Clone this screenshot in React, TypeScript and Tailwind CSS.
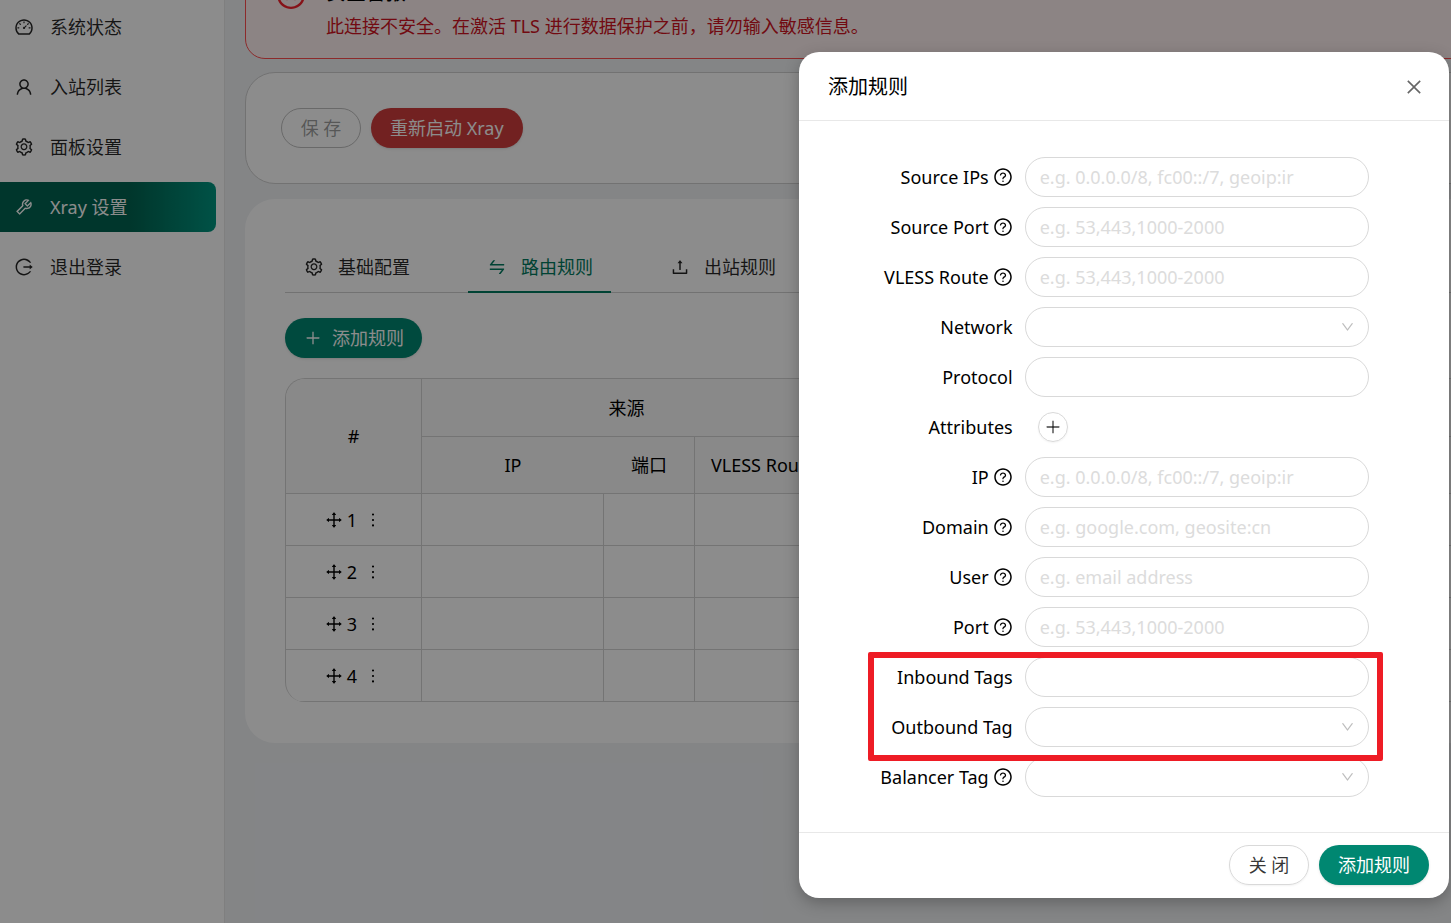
import type { ReactNode } from "react";
import type { IconType } from "react-icons";
import {
  AiOutlineClose,
  AiOutlineCloseCircle,
  AiOutlineDashboard,
  AiOutlineDown,
  AiOutlineDrag,
  AiOutlineLogout,
  AiOutlineMore,
  AiOutlinePlus,
  AiOutlineQuestionCircle,
  AiOutlineSetting,
  AiOutlineSwap,
  AiOutlineTool,
  AiOutlineUpload,
  AiOutlineUser,
} from "react-icons/ai";

type NavItem = { label: string; icon: IconType; active?: boolean };

const navItems: NavItem[] = [
  { label: "系统状态", icon: AiOutlineDashboard },
  { label: "入站列表", icon: AiOutlineUser },
  { label: "面板设置", icon: AiOutlineSetting },
  { label: "Xray 设置", icon: AiOutlineTool, active: true },
  { label: "退出登录", icon: AiOutlineLogout },
];

const tabs: NavItem[] = [
  { label: "基础配置", icon: AiOutlineSetting },
  { label: "路由规则", icon: AiOutlineSwap, active: true },
  { label: "出站规则", icon: AiOutlineUpload },
];

function Sidebar() {
  return (
    <nav className="w-[225px] shrink-0 border-r border-[#e8e8e8] bg-white pt-0.5">
      <ul className="flex flex-col gap-2.5">
        {navItems.map(({ label, icon: Icon, active }) => (
          <li key={label}>
            <a
              href="#"
              className={
                active
                  ? "mr-2 flex h-[50px] items-center gap-4 rounded-r-lg bg-linear-to-r from-[#006350] from-60% to-[#009681] pl-3.5 text-white"
                  : "mr-2 flex h-[50px] items-center gap-4 pl-3.5 text-black/85"
              }
            >
              <Icon className="size-5" />
              {label}
            </a>
          </li>
        ))}
      </ul>
    </nav>
  );
}

function RulesTable() {
  const head = "border-r border-b border-[#d4d4d4] px-4 font-normal";
  const sub = "border-b border-[#d4d4d4] px-4 font-normal whitespace-nowrap";
  const cell = "border-r border-b border-[#d4d4d4]";
  return (
    <div className="overflow-hidden rounded-[20px] border-t border-l border-[#d4d4d4]">
      <table className="w-full table-fixed border-separate border-spacing-0 text-center">
        <colgroup>
          <col className="w-[136px]" />
          <col className="w-[182px]" />
          <col className="w-[91px]" />
          <col className="w-[137px]" />
          <col />
          <col />
          <col />
        </colgroup>
        <thead className="bg-[#fafafa]">
          <tr className="h-[58px]">
            <th rowSpan={2} className={head}>#</th>
            <th colSpan={3} className={head}>来源</th>
            <th colSpan={3} className={head}>目标地址</th>
          </tr>
          <tr className="h-[57px]">
            <th className={sub}>IP</th>
            <th className="border-r border-b border-[#d4d4d4] font-normal">端口</th>
            <th className={head + " whitespace-nowrap"}>VLESS Route</th>
            <th className={sub}>IP</th>
            <th className={sub}>域名</th>
            <th className={head}>端口</th>
          </tr>
        </thead>
        <tbody>
          {[1, 2, 3, 4].map((n) => (
            <tr key={n} className="h-[52px]">
              <td className={cell}>
                <span className="flex items-center justify-center">
                  <AiOutlineDrag className="size-5" />
                  <span className="ml-[3px]">{n}</span>
                  <button type="button" aria-label="更多" className="ml-1.5">
                    <AiOutlineMore className="size-5" />
                  </button>
                </span>
              </td>
              <td className={cell} />
              <td className={cell} />
              <td className={cell} />
              <td className={cell} />
              <td className={cell} />
              <td className={cell} />
            </tr>
          ))}
        </tbody>
      </table>
    </div>
  );
}

function Panel() {
  return (
    <main className="-mt-10 -mr-20 min-w-0 flex-1 pl-5">
      <section className="flex gap-[19px] rounded-[20px] border border-[#ff4d4f] bg-[#fff1f0] py-[18px] pl-[29px]">
        <AiOutlineCloseCircle className="size-8 text-[#f5222d]" />
        <div className="leading-7">
          <h2 className="mb-[5px] text-xl leading-7">安全警报</h2>
          <p className="text-[#cf1322]">此连接不安全。在激活 TLS 进行数据保护之前，请勿输入敏感信息。</p>
        </div>
      </section>

      <section className="mt-[13px] flex gap-2.5 rounded-[30px] border border-[#d0d0d0] bg-white p-[35px]">
        <button
          type="button"
          disabled
          className="h-10 w-20 rounded-full border border-[#bfbfbf] text-black/40"
        >
          保 存
        </button>
        <button type="button" className="h-10 rounded-full bg-[#cf3c3c] px-[19px] text-white shadow-sm">
          重新启动 Xray
        </button>
      </section>

      <section className="mt-[15px] rounded-[30px] bg-white px-10 pt-[43px] pb-[41px]">
        <div role="tablist" className="flex gap-10 border-b border-[#cfcfcf]">
          {tabs.map(({ label, icon: Icon, active }) => (
            <button
              key={label}
              type="button"
              role="tab"
              aria-selected={!!active}
              className={
                active
                  ? "-mb-px flex h-[51px] items-center gap-3.5 border-b-2 border-[#007a60] pr-[18px] pl-[19px] text-[#007a60]"
                  : "-mb-px flex h-[51px] items-center gap-3.5 border-b-2 border-transparent pr-[18px] pl-[19px] text-black/85"
              }
            >
              <Icon className="size-5" />
              {label}
            </button>
          ))}
        </div>
        <button
          type="button"
          className="mt-[25px] mb-5 flex h-10 items-center gap-2.5 rounded-full bg-[#008771] pr-[18px] pl-[19px] text-white shadow-sm"
        >
          <AiOutlinePlus className="size-[18px]" />
          添加规则
        </button>
        <RulesTable />
      </section>
    </main>
  );
}

const control =
  "h-10 w-full rounded-full border border-[#d9d9d9] bg-white px-3.5 text-black placeholder:text-[#dcdcdc]";

function Field({ id, label, help, children }: { id: string; label: string; help?: boolean; children: ReactNode }) {
  return (
    <div className="grid grid-cols-24 items-center">
      <label
        htmlFor={id}
        className="col-span-8 flex h-10 items-center justify-end gap-1 pr-3 whitespace-nowrap"
      >
        {label}
        {help && <AiOutlineQuestionCircle className="size-5" />}
      </label>
      <div className="col-span-14">{children}</div>
    </div>
  );
}

function TextField({ id, label, help, placeholder }: { id: string; label: string; help?: boolean; placeholder?: string }) {
  return (
    <Field id={id} label={label} help={help}>
      <input id={id} type="text" placeholder={placeholder} className={control} />
    </Field>
  );
}

function SelectField({ id, label, help }: { id: string; label: string; help?: boolean }) {
  return (
    <Field id={id} label={label} help={help}>
      <div className="relative">
        <select id={id} defaultValue="" className={control + " appearance-none"}>
          <option value=""></option>
        </select>
        <AiOutlineDown className="pointer-events-none absolute top-1/2 right-3.5 size-[15px] -translate-y-1/2 text-[#bfbfbf]" />
      </div>
    </Field>
  );
}

function RuleDialog() {
  const ip = "e.g. 0.0.0.0/8, fc00::/7, geoip:ir";
  const port = "e.g. 53,443,1000-2000";
  return (
    <div
      role="dialog"
      aria-labelledby="rule-title"
      className="w-[650px] rounded-[20px] bg-white shadow-[0_5px_15px_rgba(0,0,0,0.25)]"
    >
      <header className="flex items-center justify-between border-b border-[#e8e8e8] pt-[21px] pr-[25px] pb-[19px] pl-[29px]">
        <h1 id="rule-title" className="text-xl leading-7">添加规则</h1>
        <button type="button" aria-label="关闭" className="text-black/60">
          <AiOutlineClose className="size-5" />
        </button>
      </header>

      <form className="flex flex-col gap-2.5 pt-9 pr-[31px] pb-[35px] pl-[29px]">
        <TextField id="source-ips" label="Source IPs" help placeholder={ip} />
        <TextField id="source-port" label="Source Port" help placeholder={port} />
        <TextField id="vless-route" label="VLESS Route" help placeholder={port} />
        <SelectField id="network" label="Network" />
        <TextField id="protocol" label="Protocol" />
        <Field id="attributes" label="Attributes">
          <button
            id="attributes"
            type="button"
            aria-label="Attributes"
            className="ml-[13px] flex size-[30px] items-center justify-center rounded-full border border-[#d9d9d9] text-black/75 shadow-xs"
          >
            <AiOutlinePlus className="size-[18px]" />
          </button>
        </Field>
        <TextField id="ip" label="IP" help placeholder={ip} />
        <TextField id="domain" label="Domain" help placeholder="e.g. google.com, geosite:cn" />
        <TextField id="user" label="User" help placeholder="e.g. email address" />
        <TextField id="port" label="Port" help placeholder={port} />
        <div className="relative flex flex-col gap-2.5">
          <TextField id="inbound-tags" label="Inbound Tags" />
          <SelectField id="outbound-tag" label="Outbound Tag" />
          <div className="pointer-events-none absolute -top-[5px] right-[35px] -bottom-[14px] left-10 z-10 rounded-xs border-6 border-[#ee1c25]" />
        </div>
        <SelectField id="balancer-tag" label="Balancer Tag" help />
      </form>

      <footer className="flex justify-end gap-2.5 border-t border-[#e8e8e8] px-5 pt-3 pb-[13px]">
        <button type="button" className="h-10 w-20 rounded-full border border-[#d9d9d9] text-black/80 shadow-xs">
          关 闭
        </button>
        <button type="button" className="h-10 rounded-full bg-[#008771] px-[19px] text-white shadow-sm">
          添加规则
        </button>
      </footer>
    </div>
  );
}

export default function App() {
  return (
    <div className="relative flex h-screen overflow-hidden bg-[#f0f2f5] font-['Noto_Sans','Noto_Sans_CJK_SC',sans-serif] text-lg leading-7 text-black">
      <Sidebar />
      <Panel />
      <div className="absolute inset-0 flex items-start justify-end bg-black/45 pt-[52px] pr-0.5">
        <RuleDialog />
      </div>
    </div>
  );
}
